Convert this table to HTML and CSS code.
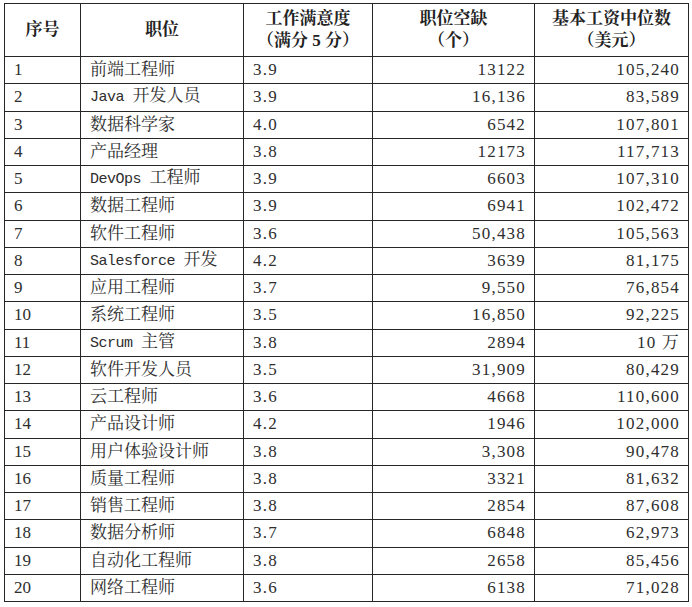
FILE: index.html
```html
<!DOCTYPE html>
<html lang="zh-CN">
<head>
<meta charset="utf-8">
<title>职位满意度</title>
<link rel="stylesheet" href="styles.css">
</head>
<body>
<table class="jobs">
  <colgroup>
    <col class="c-no">
    <col class="c-title">
    <col class="c-sat">
    <col class="c-open">
    <col class="c-pay">
  </colgroup>
  <thead>
    <tr>
      <th>序号</th>
      <th>职位</th>
      <th>工作满意度<br>（满分 5 分）</th>
      <th>职位空缺<br>（个）</th>
      <th>基本工资中位数<br>（美元）</th>
    </tr>
  </thead>
  <tbody>
    <tr><td>1</td><td>前端工程师</td><td class="sat">3.9</td><td class="num">13122</td><td class="num">105,240</td></tr>
    <tr><td>2</td><td><span class="lat">Java </span>开发人员</td><td class="sat">3.9</td><td class="num">16,136</td><td class="num">83,589</td></tr>
    <tr><td>3</td><td>数据科学家</td><td class="sat">4.0</td><td class="num">6542</td><td class="num">107,801</td></tr>
    <tr><td>4</td><td>产品经理</td><td class="sat">3.8</td><td class="num">12173</td><td class="num">117,713</td></tr>
    <tr><td>5</td><td><span class="lat">DevOps </span>工程师</td><td class="sat">3.9</td><td class="num">6603</td><td class="num">107,310</td></tr>
    <tr><td>6</td><td>数据工程师</td><td class="sat">3.9</td><td class="num">6941</td><td class="num">102,472</td></tr>
    <tr><td>7</td><td>软件工程师</td><td class="sat">3.6</td><td class="num">50,438</td><td class="num">105,563</td></tr>
    <tr><td>8</td><td><span class="lat">Salesforce </span>开发</td><td class="sat">4.2</td><td class="num">3639</td><td class="num">81,175</td></tr>
    <tr><td>9</td><td>应用工程师</td><td class="sat">3.7</td><td class="num">9,550</td><td class="num">76,854</td></tr>
    <tr><td>10</td><td>系统工程师</td><td class="sat">3.5</td><td class="num">16,850</td><td class="num">92,225</td></tr>
    <tr><td>11</td><td><span class="lat">Scrum </span>主管</td><td class="sat">3.8</td><td class="num">2894</td><td class="num">10 万</td></tr>
    <tr><td>12</td><td>软件开发人员</td><td class="sat">3.5</td><td class="num">31,909</td><td class="num">80,429</td></tr>
    <tr><td>13</td><td>云工程师</td><td class="sat">3.6</td><td class="num">4668</td><td class="num">110,600</td></tr>
    <tr><td>14</td><td>产品设计师</td><td class="sat">4.2</td><td class="num">1946</td><td class="num">102,000</td></tr>
    <tr><td>15</td><td>用户体验设计师</td><td class="sat">3.8</td><td class="num">3,308</td><td class="num">90,478</td></tr>
    <tr><td>16</td><td>质量工程师</td><td class="sat">3.8</td><td class="num">3321</td><td class="num">81,632</td></tr>
    <tr><td>17</td><td>销售工程师</td><td class="sat">3.8</td><td class="num">2854</td><td class="num">87,608</td></tr>
    <tr><td>18</td><td>数据分析师</td><td class="sat">3.7</td><td class="num">6848</td><td class="num">62,973</td></tr>
    <tr><td>19</td><td>自动化工程师</td><td class="sat">3.8</td><td class="num">2658</td><td class="num">85,456</td></tr>
    <tr><td>20</td><td>网络工程师</td><td class="sat">3.6</td><td class="num">6138</td><td class="num">71,028</td></tr>
  </tbody>
</table>
</body>
</html>
```

FILE: styles.css
```css
html, body {
  margin: 0;
  padding: 0;
  background: #ffffff;
}

body {
  padding: 3px 0 0 4px;
  font-family: "Liberation Serif", "Noto Serif CJK SC", "Noto Sans CJK SC", serif;
  font-size: 17px;
  color: #2e2e2e;
}

.jobs {
  border-collapse: collapse;
  table-layout: fixed;
  width: 684px;
  border: 1px solid #808080;
}

.c-no { width: 76px; }
.c-title { width: 163px; }
.c-sat { width: 129px; }
.c-open { width: 162px; }
.c-pay { width: 154px; }

.jobs th,
.jobs td {
  border: 1px solid #262626;
  padding: 0 9px;
  vertical-align: middle;
  white-space: nowrap;
}

.jobs th {
  height: 52px;
  font-weight: bold;
  text-align: center;
  line-height: 22px;
  color: #222;
}

.jobs td {
  height: 26.25px;
  line-height: 20px;
  text-align: left;
}

.jobs td.sat {
  letter-spacing: 1.2px;
}

.jobs td.num {
  text-align: right;
  letter-spacing: 1.2px;
  padding-right: 8px;
}

.lat {
  font-family: "Liberation Mono", "DejaVu Sans Mono", monospace;
  font-size: 15px;
  letter-spacing: -0.5px;
}
```
